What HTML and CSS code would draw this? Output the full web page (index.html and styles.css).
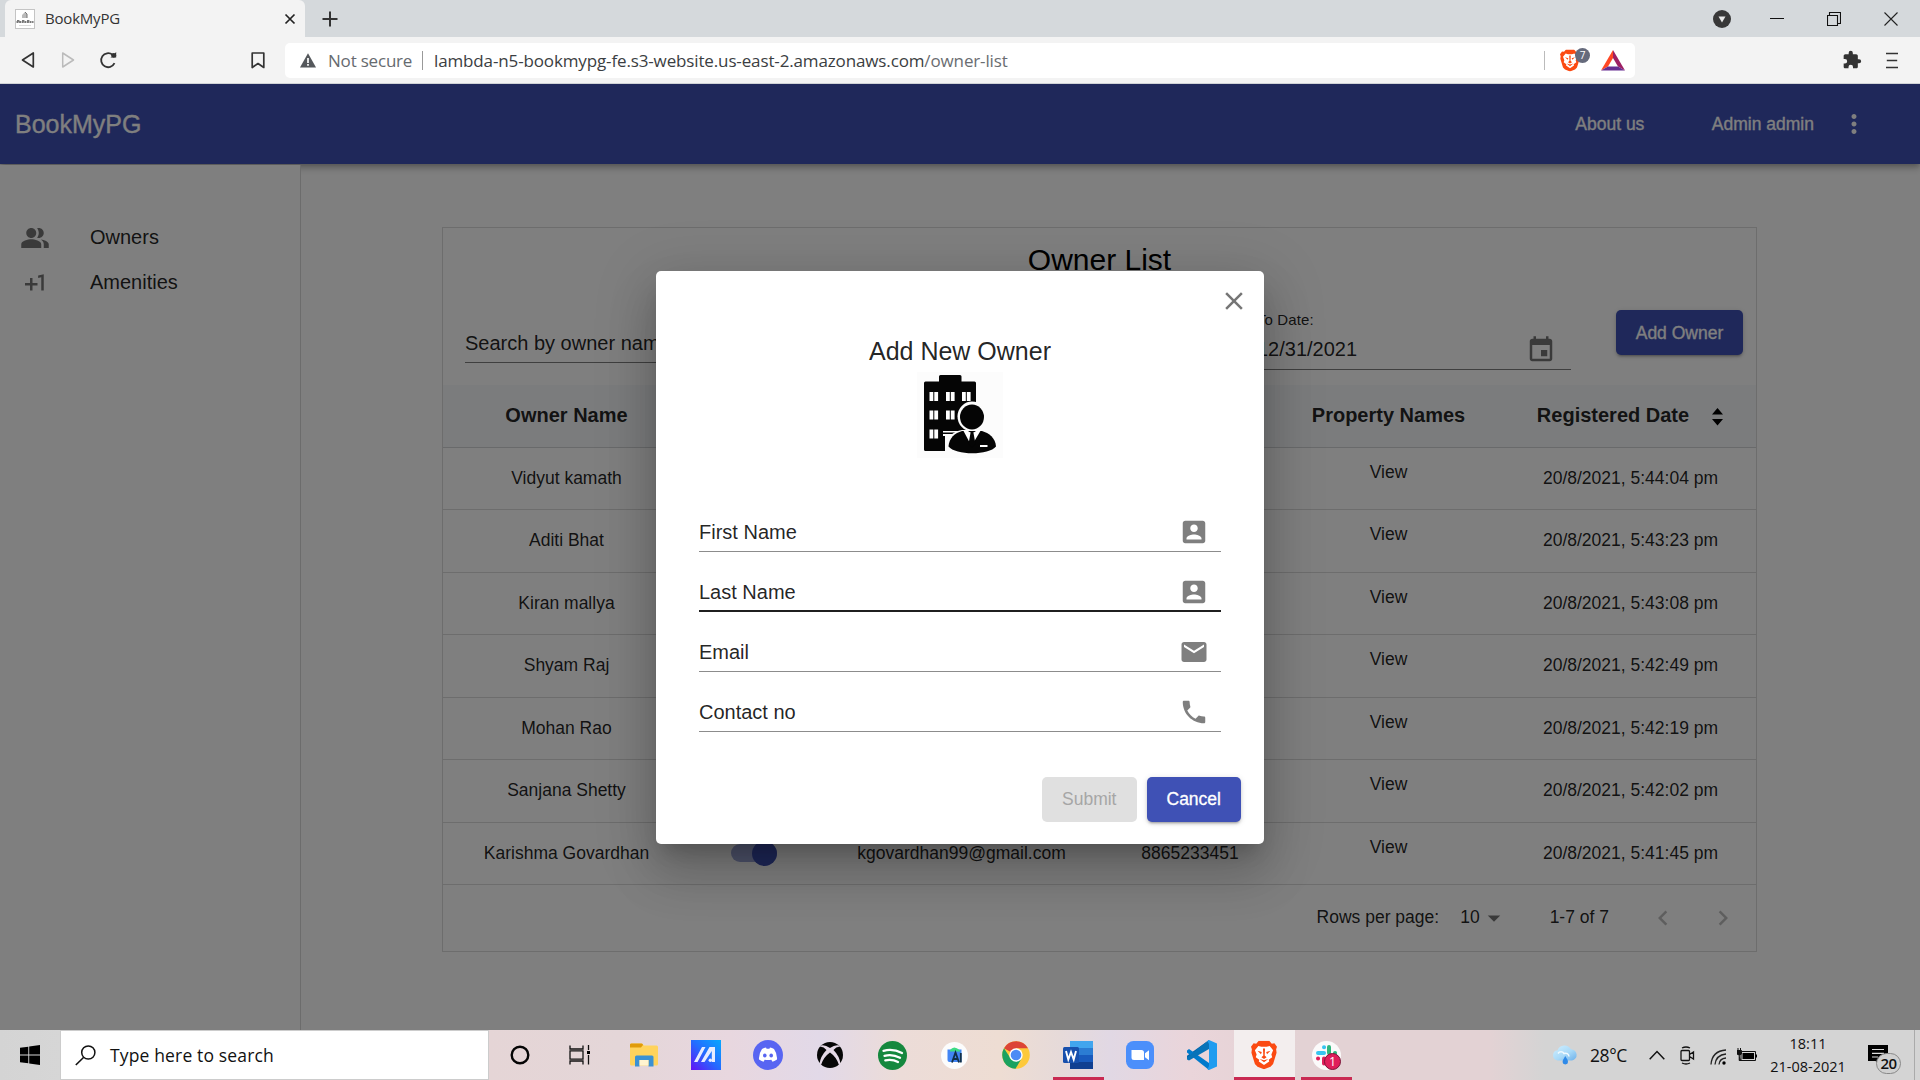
FILE: index.html
```html
<!DOCTYPE html>
<html lang="en">
<head>
<meta charset="utf-8">
<title>BookMyPG</title>
<link rel="stylesheet" href="styles.css">
</head>
<body>
<div class="screen">
  <header class="tabstrip">
    <div class="tab">
      <svg class="favicon" width="20" height="20" viewBox="0 0 20 20"><rect x=".5" y=".5" width="19" height="19" fill="#fff" stroke="#c4c4c4"/><path d="M7 9V6l3-3 2 2v4z" fill="#bbb"/><path d="M10 3l2 2v4" fill="none" stroke="#777"/><path d="M1.500 13h17M2 11.800h3m2 0h3m2 0h3" stroke="#777" stroke-width="1.800" stroke-dasharray="2 .6"/><path d="M4 16.500h12" stroke="#ddd"/></svg>
      <span class="tab-title">BookMyPG</span>
      <svg class="tab-close" width="12" height="12" viewBox="0 0 12 12"><path d="M1.500 1.500l9 9m0-9l-9 9" stroke="#222" stroke-width="1.700"/></svg>
    </div>
    <svg class="newtab" width="16" height="16" viewBox="0 0 16 16"><path d="M8 .5v15M.5 8h15" stroke="#333" stroke-width="2"/></svg>
    <div class="winctl">
      <svg width="18" height="18" viewBox="0 0 18 18"><circle cx="9" cy="9" r="9" fill="#383838"/><path d="M5.500 6.500h7L9 12.500z" fill="#e8e8e8"/></svg>
      <svg width="14" height="14" viewBox="0 0 14 14"><path d="M0 6.500h14" stroke="#111"/></svg>
      <svg width="14" height="14" viewBox="0 0 14 14"><path d="M.5 3.500h10v10H.5zM2.500 3.500v-3h11v11h-3" fill="none" stroke="#111" stroke-width="1.100"/></svg>
      <svg width="14" height="14" viewBox="0 0 14 14"><path d="M.5.5l13 13m0-13l-13 13" stroke="#222" stroke-width="1.100"/></svg>
    </div>
  </header>

  <div class="toolbar">
    <div class="nav">
      <svg width="14" height="18" viewBox="0 0 14 18"><path d="M12.300 2v14L1.500 9z" fill="none" stroke="#333" stroke-width="1.700" stroke-linejoin="round"/></svg>
      <svg width="14" height="18" viewBox="0 0 14 18"><path d="M1.700 2v14L12.500 9z" fill="none" stroke="#bbb" stroke-width="1.500" stroke-linejoin="round"/></svg>
      <svg class="reload" width="18" height="18" viewBox="0 0 18 18"><path d="M15.500 12.200A7 7 0 1 1 13.500 3.700" fill="none" stroke="#333" stroke-width="1.800"/><path d="M11.500 6.500h5.700V1z" fill="#333"/><circle cx="14.700" cy="4.300" r="2.400" fill="#333"/></svg>
      <svg class="bookmark" width="14" height="17" viewBox="0 0 14 17"><path d="M1.200 1h11.600v14.500L7 11.500l-5.800 4z" fill="none" stroke="#333" stroke-width="1.700" stroke-linejoin="round"/></svg>
    </div>
    <div class="address">
      <svg class="warn" width="16" height="15" viewBox="0 0 16 15"><path d="M8 .3L16 14.500H0z" fill="#55585c"/><path d="M8 5v5M8 11v1.700" stroke="#fff" stroke-width="1.700"/></svg>
      <span class="notsecure">Not secure</span>
      <i class="vbar"></i>
      <span class="url"><span class="host">lambda-n5-bookmypg-fe.s3-website.us-east-2.amazonaws.com</span><span class="path">/owner-list</span></span>
      <i class="vbar shieldbar"></i>
      <div class="shield">
        <svg width="20" height="23" viewBox="0 0 30 33"><use href="#lion"/></svg>
        <b class="shield-count">7</b>
      </div>
      <svg class="bat" width="24" height="21" viewBox="0 0 24 21"><path d="M12 0L0 20.500 7 16.500 12 8z" fill="#ff4724"/><path d="M12 0l12 20.500-7-4L12 8z" fill="#9e1f63"/><path d="M0 20.500h24l-7-4H7z" fill="#662d91"/></svg>
    </div>
    <svg class="puzzle" width="20" height="20" viewBox="0 0 24 24"><path fill="#333" d="M20.500 11H19V7c0-1.100-.9-2-2-2h-4V3.500a2.500 2.500 0 0 0-5 0V5H4c-1.100 0-2 .9-2 2v3.800h1.500a2.700 2.700 0 0 1 0 5.400H2V20c0 1.100.9 2 2 2h3.800v-1.500a2.700 2.700 0 0 1 5.400 0V22H17c1.100 0 2-.9 2-2v-4h1.500a2.500 2.500 0 0 0 0-5z"/></svg>
    <svg class="menu" width="12" height="17" viewBox="0 0 12 17"><path d="M0 1.500h12M.8 8.500h10.400M0 15.500h12" stroke="#333" stroke-width="1.700"/></svg>
  </div>

  <div class="app">
    <div class="appbar">
      <span class="brand">BookMyPG</span>
      <span class="about">About us</span>
      <span class="user">Admin admin</span>
      <svg class="mi" viewBox="0 0 24 24"><path d="M12 8c1.100 0 2-.9 2-2s-.9-2-2-2-2 .9-2 2 .9 2 2 2zm0 2c-1.100 0-2 .9-2 2s.9 2 2 2 2-.9 2-2-.9-2-2-2zm0 6c-1.100 0-2 .9-2 2s.9 2 2 2 2-.9 2-2-.9-2-2-2z"/></svg>
    </div>
    <div class="body">
      <nav class="sidebar">
        <div class="navitem"><svg class="mi" viewBox="0 0 24 24"><path d="M16.670 13.130C18.040 14.060 19 15.320 19 17v3h4v-3c0-2.180-3.570-3.470-6.330-3.870zM15 12c2.210 0 4-1.790 4-4s-1.790-4-4-4c-.47 0-.91.1-1.330.24C14.500 5.270 15 6.580 15 8s-.5 2.730-1.330 3.760c.42.14.86.24 1.330.24zM9 12c2.210 0 4-1.790 4-4s-1.790-4-4-4-4 1.790-4 4 1.790 4 4 4zm0 1c-2.670 0-8 1.340-8 4v3h16v-3c0-2.660-5.330-4-8-4z"/></svg><span>Owners</span></div>
        <div class="navitem"><svg class="mi" viewBox="0 0 24 24"><path d="M10 8H8v4H4v2h4v4h2v-4h4v-2h-4zm4.500-1.920V7.900l2.500-.5V18h2V5z"/></svg><span>Amenities</span></div>
      </nav>
      <main class="main">
        <section class="card">
          <h1 class="card-title">Owner List</h1>
          <div class="filters">
            <div class="field search">Search by owner name</div>
            <div class="datefield">
              <span class="datelabel">To Date:</span>
              <div class="field date"><span>12/31/2021</span><svg class="mi" viewBox="0 0 24 24"><path d="M17 12h-5v5h5v-5zM16 1v2H8V1H6v2H5c-1.110 0-1.990.9-1.990 2L3 19c0 1.100.89 2 2 2h14c1.100 0 2-.9 2-2V5c0-1.100-.9-2-2-2h-1V1h-2zm3 18H5V8h14v11z"/></svg></div>
            </div>
            <button class="btn primary add">Add Owner</button>
          </div>
          <div class="row head"><span>Owner Name</span><span></span><span></span><span></span><span>Property Names</span><span class="sorted">Registered Date<svg width="11" height="18" viewBox="0 0 11 18"><path d="M5.500 0L11 6.500H0zM5.500 17.500L11 11H0z" fill="#000"/></svg></span></div>
          <div class="row"><span>Vidyut kamath</span><span></span><span></span><span></span><span class="view">View</span><span class="when">20/8/2021, 5:44:04 pm</span></div>
          <div class="row"><span>Aditi Bhat</span><span></span><span></span><span></span><span class="view">View</span><span class="when">20/8/2021, 5:43:23 pm</span></div>
          <div class="row"><span>Kiran mallya</span><span></span><span></span><span></span><span class="view">View</span><span class="when">20/8/2021, 5:43:08 pm</span></div>
          <div class="row"><span>Shyam Raj</span><span></span><span></span><span></span><span class="view">View</span><span class="when">20/8/2021, 5:42:49 pm</span></div>
          <div class="row"><span>Mohan Rao</span><span></span><span></span><span></span><span class="view">View</span><span class="when">20/8/2021, 5:42:19 pm</span></div>
          <div class="row"><span>Sanjana Shetty</span><span></span><span></span><span></span><span class="view">View</span><span class="when">20/8/2021, 5:42:02 pm</span></div>
          <div class="row"><span>Karishma Govardhan</span><span><i class="switch"><i class="thumb"></i></i></span><span>kgovardhan99@gmail.com</span><span>8865233451</span><span class="view">View</span><span class="when">20/8/2021, 5:41:45 pm</span></div>
          <div class="pager">
            <span class="rpp">Rows per page:</span><span class="rppval">10</span>
            <svg class="mi drop" viewBox="0 0 24 24"><path d="M7 10l5 5 5-5z"/></svg>
            <span class="range">1-7 of 7</span>
            <svg class="mi chev" viewBox="0 0 24 24"><path d="M15.410 7.410L14 6l-6 6 6 6 1.410-1.410L10.830 12z"/></svg>
            <svg class="mi chev next" viewBox="0 0 24 24"><path d="M10 6L8.590 7.410 13.170 12l-4.580 4.590L10 18l6-6z"/></svg>
          </div>
        </section>
      </main>
    </div>

    <div class="backdrop">
      <div class="dialog">
        <svg class="mi close" viewBox="0 0 24 24"><path d="M19 6.410L17.590 5 12 10.590 6.410 5 5 6.410 10.590 12 5 17.590 6.410 19 12 13.410 17.590 19 19 17.590 13.410 12z"/></svg>
        <h2 class="dialog-title">Add New Owner</h2>
        <svg class="logo" width="86" height="86" viewBox="0 0 86 86">
          <rect width="86" height="86" fill="#fcfcfc"/>
          <path d="M7 11q0-1.500 1.500-1.500H22V4.500q0-1.500 1.500-1.500H43q1.500 0 1.500 1.500v5h13q1.500 0 1.500 1.500v68H8.500Q7 79 7 77.500z" fill="#050505"/>
          <path d="M12.500 20h3.800v9h-3.800zm4.800 0h3.800v9h-3.800zM29 20h3.800v9H29zm4.800 0h3.800v9h-3.800zM45 20h3.800v9H45zm4.800 0h3.800v9h-3.800zM12.500 38.500h3.800v9h-3.800zm4.800 0h3.800v9h-3.800zM29 38.500h3.800v9H29zm4.800 0h3.800v9h-3.800zM12.500 57.500h3.800v9h-3.800zm4.800 0h3.800v9h-3.800zM26 59h18v1.500H26zM26 62h15v2H26z" fill="#fff"/>
          <path d="M28 64h32v17H28z" fill="#fcfcfc"/>
          <ellipse cx="55" cy="44.500" rx="14.500" ry="15" fill="#fcfcfc"/>
          <path d="M29 76c0-10 7-17 16-18h19l8 8v15H30z" fill="#fcfcfc"/>
          <ellipse cx="55" cy="45" rx="12" ry="12.500" fill="#050505"/>
          <path d="M31.500 74.500C32 66 38 61 45 59h20c7 2 13.500 7 14 15.500-7 9-40.500 9-47.500 0z" fill="#050505"/>
          <path d="M46 58l8.500 16L64 58l-5 .5-2.500 1.500h-3L51 58.500z" fill="#fff"/>
          <path d="M53.500 61h3l2 11-3.500 4-3.500-4zM51 59h8l-4 2.500z" fill="#050505"/>
          <path d="M63 73h7.500v2H63z" fill="#fff"/>
        </svg>
        <div class="form">
          <div class="field input"><span>First Name</span><svg class="mi" viewBox="0 0 24 24"><use href="#account"/></svg></div>
          <div class="field input focused"><span>Last Name</span><svg class="mi" viewBox="0 0 24 24"><use href="#account"/></svg></div>
          <div class="field input"><span>Email</span><svg class="mi" viewBox="0 0 24 24"><path d="M20 4H4c-1.100 0-1.990.9-1.990 2L2 18c0 1.100.9 2 2 2h16c1.100 0 2-.9 2-2V6c0-1.100-.9-2-2-2zm0 4l-8 5-8-5V6l8 5 8-5v2z"/></svg></div>
          <div class="field input"><span>Contact no</span><svg class="mi" viewBox="0 0 24 24"><path d="M6.620 10.790c1.440 2.830 3.760 5.140 6.590 6.590l2.200-2.200c.27-.27.67-.36 1.020-.24 1.120.37 2.330.57 3.570.57.55 0 1 .45 1 1V20c0 .55-.45 1-1 1-9.390 0-17-7.610-17-17 0-.55.45-1 1-1h3.500c.55 0 1 .45 1 1 0 1.250.2 2.450.57 3.570.11.35.03.74-.25 1.020l-2.200 2.200z"/></svg></div>
        </div>
        <div class="actions">
          <button class="btn disabled">Submit</button>
          <button class="btn primary">Cancel</button>
        </div>
      </div>
    </div>
  </div>

  <footer class="taskbar">
    <div class="start"><svg width="20" height="20" viewBox="0 0 20 20"><path d="M0 2.800L8.300 1.700V9.500H0zM9.200 1.500L20 0v9.500H9.200zM0 10.400h8.300v7.900L0 17.200zM9.200 10.400H20V20L9.200 18.500z"/></svg></div>
    <div class="tsearch">
      <svg width="21" height="21" viewBox="0 0 21 21"><circle cx="13.300" cy="7.500" r="6.600" fill="none" stroke="#111" stroke-width="1.500"/><path d="M8.500 12.500L.8 20" stroke="#111" stroke-width="1.600"/></svg>
      <span>Type here to search</span>
    </div>
    <div class="apps">
      <div class="appicon"><svg width="20" height="20" viewBox="0 0 20 20"><circle cx="10" cy="10" r="8.300" fill="none" stroke="#050505" stroke-width="2.400"/></svg></div>
      <div class="appicon taskview"><svg width="22" height="20" viewBox="0 0 22 20"><path d="M1 .5v3.500h13V.5M1 19.500v-3.500h13v3.500M1 5.800h13v8.400H1zM19.500 0v5M19.500 10v9.500" fill="none" stroke="#111" stroke-width="1.300"/><path d="M18 6h3v3h-3z"/></svg></div>
      <div class="appicon"><svg width="28" height="24" viewBox="0 0 28 24"><path d="M0 3V2Q0 .5 1.500 .5H12l2 2h12.500Q28 2.500 28 4v17q0 1.500-1.500 1.500h-25Q0 22.500 0 21z" fill="#ffd35c"/><path d="M0 4.500V1.500Q0 .5 1.500 .5H11.500q1.500 0 1.500 1.500l-2 2.500z" fill="#e09b0a"/><path d="M5 23.500V14q0-1.500 1.500-1.500h15.500q1.500 0 1.500 1.500v9.500h-5V17h-9v6.500z" fill="#3b91d3"/><path d="M9.500 17h9v5.500h-9z" fill="#fff4d0"/></svg></div>
      <div class="appicon"><svg width="30" height="30" viewBox="0 0 30 30"><defs><linearGradient id="mg" x1="0" y1="1" x2="1" y2="0"><stop offset="0" stop-color="#6410f5"/><stop offset=".5" stop-color="#246bff"/><stop offset="1" stop-color="#06a9ff"/></linearGradient></defs><rect width="30" height="30" fill="url(#mg)"/><path d="M3 22L11 7h3.500L6.500 22zM10 22l8.500-15H24v15h-3.200V11L13.500 22z" fill="#e6ecff"/><circle cx="19.300" cy="20.300" r="1.700" fill="#e6ecff"/></svg></div>
      <div class="appicon"><svg width="30" height="30" viewBox="0 0 30 30"><circle cx="15" cy="15" r="15" fill="#5865f2"/><path d="M9 9q2-1.200 4-1.500l.6 1.200h2.800L17 7.500q2 .3 4 1.500 3.500 5 3 10.500-2 1.600-4.500 2.200l-1.200-2q-3.300.8-6.600 0l-1.200 2Q8 21.100 6 19.500 5.500 14 9 9z" fill="#fff"/><ellipse cx="11.800" cy="15.500" rx="1.800" ry="2" fill="#5865f2"/><ellipse cx="18.200" cy="15.500" rx="1.800" ry="2" fill="#5865f2"/></svg></div>
      <div class="appicon"><svg width="26" height="26" viewBox="0 0 26 26"><circle cx="13" cy="13" r="13" fill="#070707"/><path d="M4 3.500Q8 2.500 13 6q5-3.500 9-2.500l1 1.500q-3-.8-6.500 3Q22.500 14 23.500 22l-1.500 1Q19.500 15 13 10.500 6.500 15 4 23l-1.500-1Q3.500 14 9.500 8 6 4.200 3 5z" fill="#e5d9e6"/></svg></div>
      <div class="appicon"><svg width="29" height="29" viewBox="0 0 29 29"><circle cx="14.500" cy="14.500" r="14.500" fill="#15883e"/><path d="M5.500 9.800q9.500-2.500 18.500 2.200M6.500 14.800q8-2 15.500 2M7.300 19.300q7-1.500 12.700 1.700" fill="none" stroke="#fff" stroke-width="2.300" stroke-linecap="round"/></svg></div>
      <div class="appicon"><svg width="27" height="27" viewBox="0 0 27 27"><circle cx="13.500" cy="13.500" r="13.500" fill="#fcfcfc"/><path d="M6.500 7.500h14V20h-12q-2 0-2-2z" fill="#4285f4"/><path d="M9 8q4-5 9.500 0l1 1.500H9z" fill="#3ddc84"/><path d="M11 20.500l3.500-10 3.500 10M12.500 17h4M19.800 11v9.500" fill="none" stroke="#123047" stroke-width="1.800"/></svg></div>
      <div class="appicon"><svg width="28" height="28" viewBox="0 0 28 28"><circle cx="14" cy="14" r="13.800" fill="#fdc93b"/><path d="M14 14L2 7.200A13.800 13.800 0 0 1 26 7.200H14z" fill="#dc4437"/><path d="M2 7.200A13.800 13.800 0 0 0 13.500 27.800L19.500 17.500 14 14l-5.500 3.200z" fill="#1aa260"/><circle cx="14" cy="14" r="6.700" fill="#fff"/><circle cx="14" cy="14" r="5.300" fill="#4c8bf5"/></svg></div>
      <div class="appicon running"><svg width="30" height="28" viewBox="0 0 30 28"><path d="M7 0h23v7H7z" fill="#41a5ee"/><path d="M7 7h23v7H7z" fill="#2b7cd3"/><path d="M7 14h23v7H7z" fill="#185abd"/><path d="M7 21h23v7H7z" fill="#103f91"/><rect y="6" width="16" height="16" rx="1.500" fill="#1750ad"/><path d="M3 10l2.300 8.500L8 11l2.700 7.500L13 10" fill="none" stroke="#fff" stroke-width="1.900"/></svg></div>
      <div class="appicon"><svg width="28" height="28" viewBox="0 0 28 28"><rect width="28" height="28" rx="7.500" fill="#4b8ffb"/><path d="M5.500 9h10q2.500 0 2.500 2.500V19H8q-2.500 0-2.500-2.500zM19 12.200l4-3v10l-4-3z" fill="#fff"/></svg></div>
      <div class="appicon"><svg width="30" height="30" viewBox="0 0 30 30"><path d="M22 0L6 15.500 1.500 19 0 17.500v-1.800L22 0z" fill="#0065a9"/><path d="M0 10.500L2 9l20 14v7L0 12.500z" fill="#007acc"/><path d="M0 17.500L22 0v9L2 20.500l-2-1z" fill="#0873b8"/><path d="M22 0l8 3.500v23L22 30q-1 0-1.500-1l1.500-3V4l-1.500-3z" fill="#1f9cf0"/></svg></div>
      <div class="appicon active"><svg width="26" height="30" viewBox="0 0 30 33"><use href="#lion"/></svg></div>
      <div class="appicon running slack"><svg width="29" height="29" viewBox="0 0 29 29"><circle cx="14.500" cy="14.500" r="14.500" fill="#fbfafa"/><g stroke-width="4" stroke-linecap="round"><path d="M6 12h6M12 6.200h.1" stroke="#36c5f0"/><path d="M17 6v6M23 12h.1" stroke="#2eb67d"/><path d="M6 17.500h.1M12 17.500v5" stroke="#e01e5a"/><path d="M17 17.500h6" stroke="#ecb22e"/></g></svg><b class="slack-badge">1</b></div>
    </div>
    <div class="tray">
      <svg class="weather" width="26" height="20" viewBox="0 0 26 20"><defs><linearGradient id="cl" x1="0" y1="0" x2="1" y2="1"><stop offset="0" stop-color="#d2efff"/><stop offset=".55" stop-color="#a9daf8"/><stop offset="1" stop-color="#6cb0ea"/></linearGradient></defs><path d="M5.500 15.500a5.200 5.200 0 0 1 0-10.300A7.500 7.500 0 0 1 19 4.200a5.700 5.700 0 0 1 1 11.300z" fill="url(#cl)"/><path d="M6 8.500a3.500 3.500 0 0 1 6 0 3.500 3.500 0 0 1 5 3" fill="none" stroke="#f0faff" stroke-width="1.500"/><path d="M13.300 11q-5.500 8 0 8.500 5.500-.5 0-8.500z" fill="#2f8ae8"/></svg>
      <span class="temp">28°C</span>
      <svg class="up" width="16" height="10" viewBox="0 0 16 10"><path d="M.7 9.200L8 1.500l7.300 7.700" fill="none" stroke="#111" stroke-width="1.500"/></svg>
      <svg class="cam" width="15" height="19" viewBox="0 0 15 19"><path d="M1 5.500q0-1 1-1h6.500q1 0 1 1v8q0 1-1 1H2q-1 0-1-1zM9.500 8.500l4-2.500v7l-4-2.500M2 2q4-2 8 0M2 17q4 2 8 0" fill="none" stroke="#111" stroke-width="1.300"/></svg>
      <svg class="wifi" width="17" height="16" viewBox="0 0 17 16"><path d="M1 15.500Q2 2 16 1M5 15.500Q6 6 16 5M9 15.500Q9.500 9.500 16 9" fill="none" stroke="#222" stroke-width="1.300"/><circle cx="14" cy="14" r="1.700"/></svg>
      <svg class="batt" width="20" height="15" viewBox="0 0 20 15"><path d="M4 3.500h14.500v9H4z" fill="none" stroke="#111"/><path d="M5.500 5h11.500v6H5.500zM18.500 6.500H20v3h-1.500z"/><path d="M0 2.500h4.500V6q-2.200 2-4.500 0zM1 0v2.500M3.500 0v2.500M2.200 7v5.500H4" fill="#111" stroke="#111"/></svg>
      <div class="clock"><span>18:11</span><span>21-08-2021</span></div>
      <div class="notif"><svg width="21" height="20" viewBox="0 0 21 20"><path d="M0 0h20v16h-8v4l-4.500-4H0z"/><path d="M4 4.500h12M4 8.300h12M4 12h6" stroke="#ddd" stroke-width="1.200"/></svg><b class="notif-count">20</b></div>
    </div>
  </footer>
</div>

<svg class="defs" width="0" height="0">
  <symbol id="account" viewBox="0 0 24 24"><path d="M3 5v14c0 1.100.89 2 2 2h14c1.100 0 2-.9 2-2V5c0-1.100-.9-2-2-2H5c-1.110 0-2 .9-2 2zm12 4c0 1.660-1.340 3-3 3s-3-1.340-3-3 1.340-3 3-3 3 1.340 3 3zm-9 8c0-2 4-3.100 6-3.100s6 1.100 6 3.100v1H6v-1z"/></symbol>
  <symbol id="lion" viewBox="0 0 30 33"><path d="M9 0h12l3 3.500 3-.5 3 4-1 3 .5 4-4 13-3 3L15 33l-7.500-3-3-3-4-13L1 10 0 7l3-4 3 .5z" fill="#fb4a12"/><path d="M8.500 6L12 7h6l3.500-1 4 5-2 5 1 3-4 3 .5 2L15 28l-6-4 .5-2-4-3 1-3-2-5z" fill="#fff"/><path d="M7.500 11.500l5 1.500-1 2.500zM22.500 11.500l-5 1.500 1 2.500zM13.800 9h2.400l-.4 8 2.200 2-3 2-3-2 2.200-2zM10 21l5 1.500L20 21l-5 4z" fill="#fb4a12"/></symbol>
</svg>
</body>
</html>
```

FILE: styles.css
```css
* { box-sizing: border-box; }
body { margin: 0; background: #fff; }
svg { display: block; flex: none; }
.defs { position: absolute; }
h1, h2 { margin: 0; font-weight: 400; }
.screen { width: 1920px; height: 1080px; display: flex; flex-direction: column; overflow: hidden; font-family: "Open Sans", "Noto Sans", sans-serif; }

/* browser chrome */
.tabstrip { height: 37px; background: #d5d9dc; display: flex; align-items: center; padding-left: 5px; flex: none; }
.tab { width: 300px; height: 37px; background: #f3f3f3; border-radius: 6px 6px 0 0; display: flex; align-items: center; padding: 0 9px 0 10px; }
.tab-title { font-size: 15px; letter-spacing: -.2px; color: #333; margin: -2px 0 0 10px; flex: 1; }
.newtab { margin-left: 17px; }
.winctl { margin-left: auto; display: flex; align-items: center; gap: 43px; padding-right: 22px; }
.winctl svg:first-child { margin-right: -4px; }
.toolbar { height: 47px; background: #f3f3f3; border-bottom: 1px solid #d0d3d6; display: flex; align-items: center; padding: 0 21px 0 21px; flex: none; }
.nav { display: flex; align-items: center; width: 264px; height: 46px; gap: 26px; }
.reload { margin-left: -2px; }
.bookmark { margin-left: auto; margin-right: 20px; }
.address { width: 1350px; height: 35px; background: #fff; border-radius: 5px; display: flex; align-items: center; padding: 0 10px 0 15px; }
.notsecure, .url { font-size: 17px; color: #3b3e42; white-space: nowrap; line-height: 35px; }
.notsecure { width: 83px; margin-left: 12px; color: #666a6f; letter-spacing: -.2px; }
.vbar { width: 1px; height: 19px; background: #999; margin: 0 11px 0 11px; }
.url { letter-spacing: -.135px; }
.path { color: #6a6d71; }
.shieldbar { margin: 0 15px 0 auto; background: #bbb; }
.shield { position: relative; width: 41px; }
.shield-count { position: absolute; left: 15px; top: -1px; width: 15px; height: 15px; border-radius: 8px; background: #656a7c; color: #fff; font-size: 10px; font-weight: 400; line-height: 15px; text-align: center; }
.puzzle { margin-left: 207px; }
.menu { margin-left: 24px; }

/* application */
.app { position: relative; height: 946px; flex: none; display: flex; flex-direction: column; font-family: "Liberation Sans", Arial, sans-serif; color: rgba(0,0,0,.87); overflow: hidden; }
.mi { width: 30px; height: 30px; fill: currentColor; }
.appbar { height: 80px; flex: none; background: #3f51b5; color: #fff; display: flex; align-items: center; padding: 0 51px 0 15px; box-shadow: 0 2px 5px -1px rgba(0,0,0,.2), 0 5px 6px rgba(0,0,0,.14), 0 1px 12px rgba(0,0,0,.12); position: relative; }
.brand { font-size: 25px; margin-right: auto; -webkit-text-stroke: .3px; }
.about, .user { font-size: 17.500px; -webkit-text-stroke: .3px; }
.about { margin-right: 67.500px; }
.user { margin-right: 25px; }
.body { flex: 1; display: flex; }
.sidebar { position: relative; width: 301px; background: #fff; border-right: 1px solid rgba(0,0,0,.15); padding: 50px 0 0 20px; margin-top: 1px; }
.navitem { height: 45px; display: flex; align-items: center; gap: 40px; font-size: 20px; }
.navitem .mi { color: rgba(0,0,0,.54); }
.navitem span { line-height: 24px; margin-top: -1px; }
.main { flex: 1; padding: 63px 0 0 141px; }
.card { width: 1315px; height: 725px; border: 1px solid rgba(0,0,0,.14); display: flex; flex-direction: column; }
.card-title { font-size: 30px; text-align: center; line-height: 36px; margin-top: 14px; color: #000; }
.filters { height: 107px; display: flex; align-items: flex-start; padding-left: 22px; }
.field { font-size: 20px; border-bottom: 1px solid rgba(0,0,0,.5); }
.search { width: 300px; height: 41px; line-height: 24px; padding-top: 9px; margin-top: 44px; }
.datefield { width: 314px; margin: 32px 0 0 492px; }
.datelabel { display: block; font-size: 15px; line-height: 20px; height: 20px; letter-spacing: .1px; }
.date { display: flex; justify-content: space-between; align-items: center; height: 40px; padding: 0 15px 0 0; }
.date .mi { color: rgba(0,0,0,.54); margin-top: 1px; }
.btn { font: 17.500px "Liberation Sans", Arial, sans-serif; height: 45px; border: 0; border-radius: 5px; padding: 0 20px; -webkit-text-stroke: .3px; }
.primary { background: #3f51b5; color: #fff; box-shadow: 0 3px 2px -2px rgba(0,0,0,.2), 0 2px 3px rgba(0,0,0,.14), 0 1px 6px rgba(0,0,0,.12); }
.disabled { background: #e0e0e0; color: #a6a6a6; -webkit-text-stroke: 0; }
.add { width: 127px; margin: 32px 0 0 45px; padding: 1px 0 0; }
.row { height: 62.500px; flex: none; display: grid; grid-template-columns: 247px 128px 287px 170px 227px 254px; align-items: center; justify-items: center; border-bottom: 1px solid rgba(0,0,0,.14); font-size: 17.500px; }
.head { font-size: 20px; font-weight: 700; background: #f6f8fb; padding-bottom: 1px; }
.sorted { display: flex; align-items: center; gap: 23px; margin-left: 2px; }
.sorted svg { margin-top: 4px; }
.view { margin-top: -12px; }
.when { margin-left: 3px; }
.switch { display: block; position: relative; width: 46px; height: 17.500px; border-radius: 9px; background: #9fa8da; margin-top: -1px; }
.thumb { position: absolute; right: 0; top: -3px; width: 25px; height: 25px; border-radius: 50%; background: #3f51b5; }
.pager { flex: 1; display: flex; align-items: center; justify-content: flex-end; font-size: 17.500px; padding: 0 18px 1px 0; }
.rppval { margin-left: 21px; }
.drop { color: rgba(0,0,0,.54); margin: 1px 41px 0 -1px; }
.range { margin-right: 39px; }
.chev { color: rgba(0,0,0,.26); }
.next { margin-left: 30px; }

.backdrop { position: absolute; inset: 0; background: rgba(0,0,0,.5); display: flex; align-items: flex-start; justify-content: center; padding-top: 187px; }
.dialog { width: 608px; height: 573px; background: #fff; border-radius: 5px; display: flex; flex-direction: column; align-items: center; padding: 15px 23px 22px; box-shadow: 0 14px 19px -9px rgba(0,0,0,.2), 0 30px 48px 4px rgba(0,0,0,.14), 0 11px 58px 10px rgba(0,0,0,.12); }
.close { align-self: flex-end; margin-right: -8px; color: rgba(0,0,0,.54); }
.dialog-title { font-size: 25px; line-height: 30px; margin-top: 20px; }
.logo { margin-top: 6px; }
.form { width: 522px; margin-top: 34px; }
.input { height: 60px; display: flex; align-items: flex-end; justify-content: space-between; padding: 0 12px 4px 0; border-color: rgba(0,0,0,.45); }
.input span { line-height: 30px; }
.input .mi { color: rgba(0,0,0,.5); }
.focused { border-bottom: 2px solid #1f1f1f; padding-bottom: 3px; }
.actions { display: flex; gap: 10px; margin: auto 0 0 auto; }
.actions .btn { width: 94.500px; }

/* desktop taskbar */
.taskbar { height: 50px; display: flex; color: #111; background: linear-gradient(90deg, #d4d4d4 0, #d6d6d6 61px, #e5d5d6 489px, #e4d6d8 620px, #e8d7df 730px, #e2d9e8 820px, #ecdcd8 900px, #eeddd3 1000px, #e6dad9 1060px, #e1d8e4 1110px, #ead5da 1190px, #e3d2d4 1300px, #e3d2d4 1490px, #d4d4d4 1545px, #d4d4d4 1920px); }
.start { width: 60px; display: flex; align-items: center; justify-content: center; }
.tsearch { width: 429px; height: 50px; background: #fff; border: 1px solid #ccc; display: flex; align-items: center; gap: 14px; padding-left: 14px; font-size: 17.500px; letter-spacing: .15px; }
.apps { display: flex; }
.appicon { position: relative; width: 62px; height: 50px; display: flex; align-items: center; justify-content: center; }
.taskview { padding-right: 4px; }
.running::after, .active::after { content: ""; position: absolute; left: 6px; right: 5px; bottom: 0; height: 3px; background: #c92a52; }
.active { background: linear-gradient(90deg, transparent 1px, #f3eeee 1px); }
.active::after { left: 1px; right: 0; }
.slack-badge { position: absolute; left: 29px; top: 23px; width: 17px; height: 17px; border-radius: 50%; background: #e01e5a; border: 1px solid #7b1438; color: #fff; font-size: 12.500px; font-weight: 400; line-height: 15px; text-align: center; }
.tray { flex: 1; display: flex; align-items: center; padding-left: 195px; }
.temp { width: 38px; margin: 0 21px 0 12px; font-size: 17.500px; letter-spacing: -.4px; }
.cam { margin-left: 15px; }
.wifi { margin-left: 15px; margin-top: 4px; }
.batt { margin-left: 10px; }
.clock { width: 78px; margin-left: 12px; display: flex; flex-direction: column; text-align: center; font-size: 14.500px; line-height: 23px; }
.notif { position: relative; margin-left: 21px; }
.notif-count { position: absolute; left: 8px; top: 8px; width: 25px; height: 21px; border-radius: 11px; border: 1px solid #888; background: #d0d0d0; font-size: 15px; font-weight: 600; line-height: 19px; text-align: center; letter-spacing: -.5px; }
.tray::after { content: ""; width: 1px; height: 50px; background: #aaa; margin-left: 25px; }
```
